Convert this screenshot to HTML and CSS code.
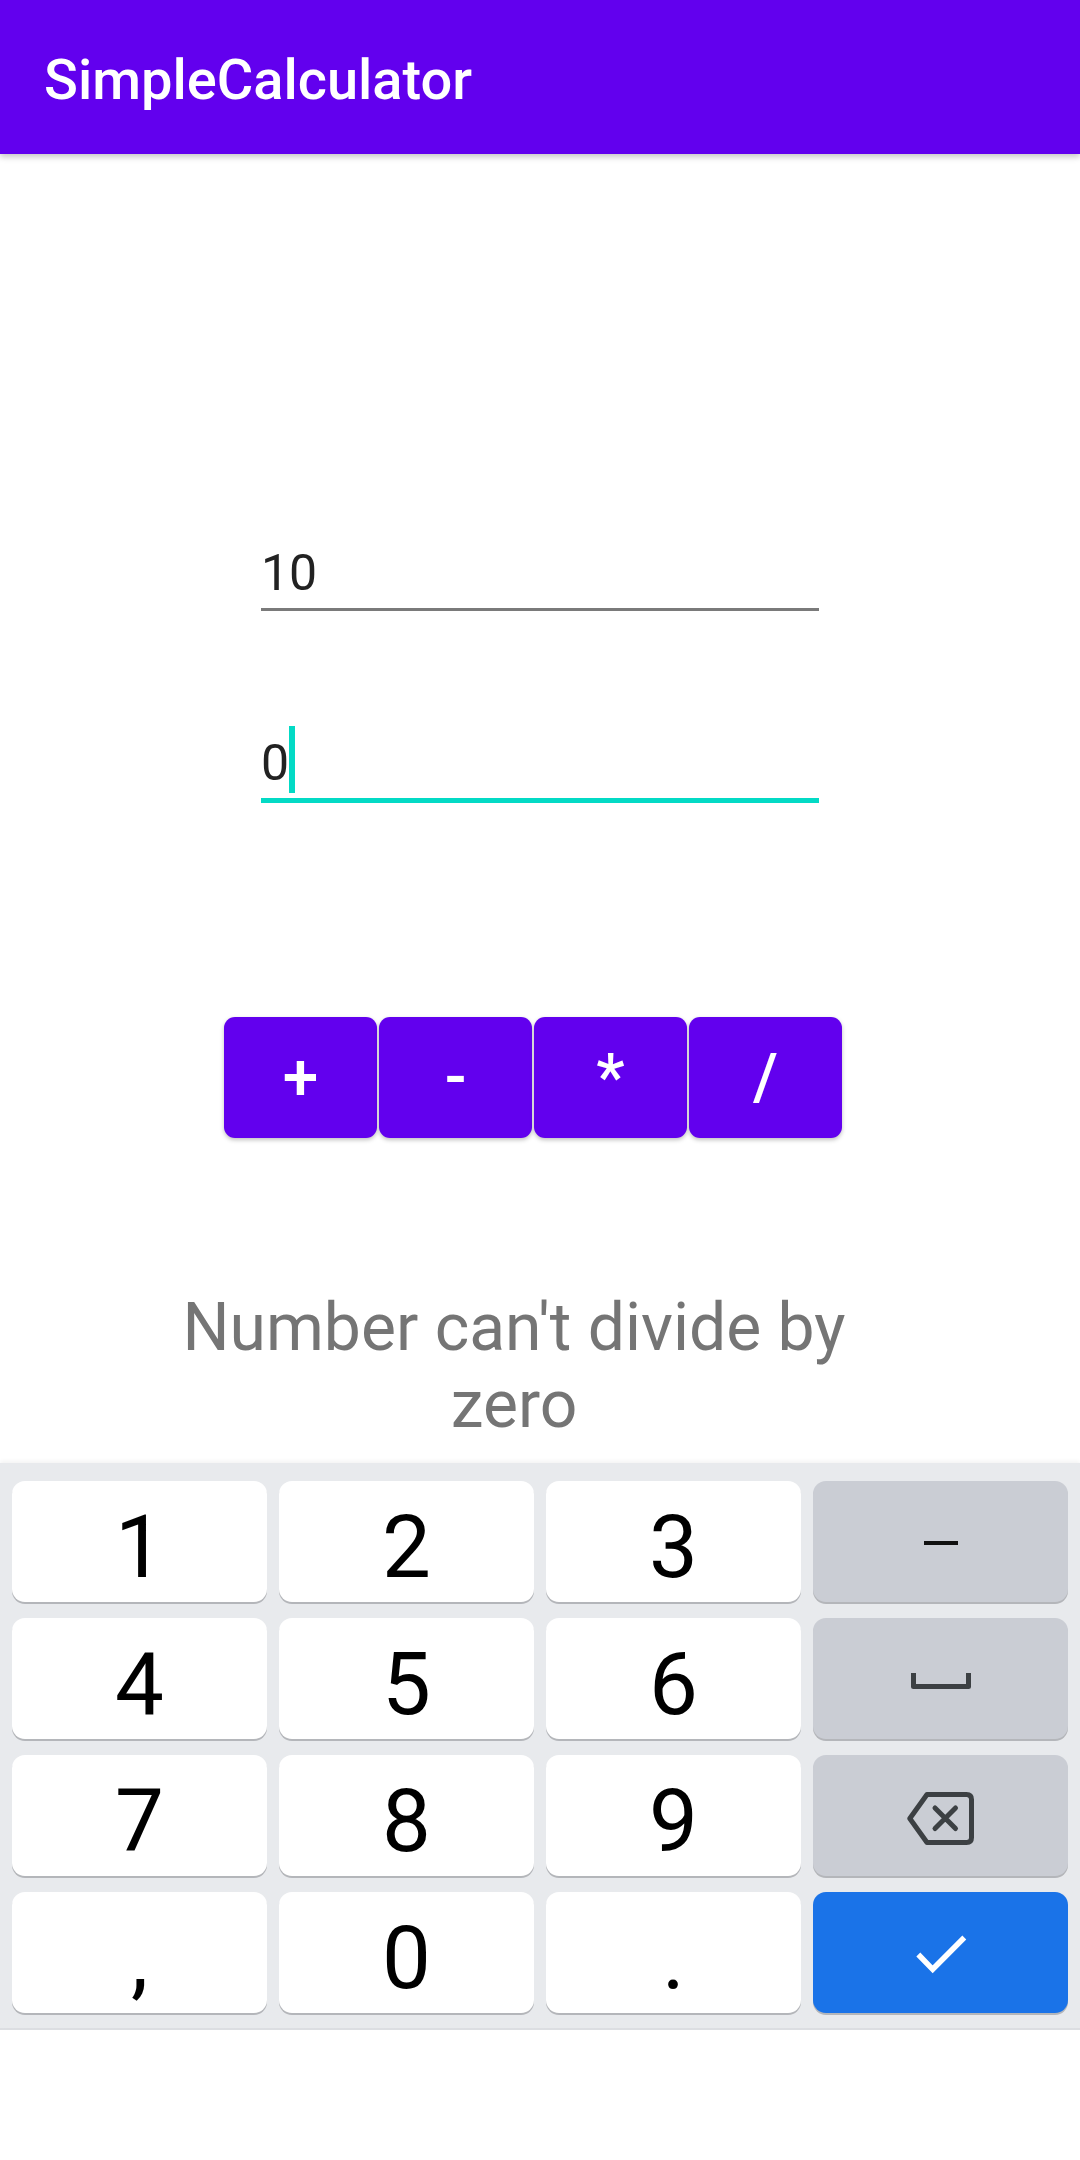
FILE: index.html
```html
<!DOCTYPE html>
<html lang="en">
<head>
<meta charset="utf-8">
<title>SimpleCalculator</title>
<link rel="stylesheet" href="styles.css">
</head>
<body>
<div class="screen">
  <header class="appbar">SimpleCalculator</header>

  <main class="content">
    <div class="field field-first">
      <span class="field-text">10</span>
    </div>
    <div class="field field-focused">
      <span class="field-text">0</span>
      <span class="cursor"></span>
    </div>

    <div class="ops">
      <button class="op">+</button>
      <button class="op">-</button>
      <button class="op">*</button>
      <button class="op">/</button>
    </div>

    <p class="message">Number can't divide by zero</p>
  </main>

  <div class="keyboard">
    <div class="key">1</div>
    <div class="key">2</div>
    <div class="key">3</div>
    <div class="key key-fn"><span class="minus-icon"></span></div>
    <div class="key">4</div>
    <div class="key">5</div>
    <div class="key">6</div>
    <div class="key key-fn">
      <svg class="space-icon" width="60" height="16" viewBox="0 0 60 16">
        <path d="M2.5 0 V13.5 H57.5 V0" fill="none" stroke="#3c4043" stroke-width="5" stroke-linejoin="round"/>
      </svg>
    </div>
    <div class="key">7</div>
    <div class="key">8</div>
    <div class="key">9</div>
    <div class="key key-fn">
      <svg class="back-icon" width="67" height="53" viewBox="0 0 67 53">
        <path d="M20 2.5 H59.5 Q64.5 2.5 64.5 7.5 V45.5 Q64.5 50.5 59.5 50.5 H20 L2.8 26.5 Z" fill="none" stroke="#3c4043" stroke-width="5" stroke-linejoin="round"/>
        <path d="M28 16 L48.5 36.5 M48.5 16 L28 36.5" fill="none" stroke="#3c4043" stroke-width="5" stroke-linecap="round"/>
      </svg>
    </div>
    <div class="key">,</div>
    <div class="key">0</div>
    <div class="key">.</div>
    <div class="key key-enter">
      <svg class="check-icon" width="52" height="42" viewBox="0 0 52 42">
        <path d="M3.3 21.5 L17.7 36.3 L49.3 4.5" fill="none" stroke="#ffffff" stroke-width="5.5"/>
      </svg>
    </div>
  </div>
  <div class="keyboard-edge"></div>
</div>
</body>
</html>
```
FILE: styles.css
```css
html, body {
  margin: 0;
  padding: 0;
  background: #ffffff;
}

.screen {
  width: 1080px;
  height: 2160px;
  overflow: hidden;
  font-family: Roboto, "Noto Sans", "Liberation Sans", sans-serif;
  background: #ffffff;
}

.appbar {
  height: 154px;
  box-sizing: border-box;
  padding-left: 44px;
  padding-top: 6px;
  display: flex;
  align-items: center;
  background: #6200ee;
  color: #ffffff;
  font-size: 56px;
  font-weight: 500;
  box-shadow: 0 3px 6px rgba(0, 0, 0, 0.22);
  position: relative;
  z-index: 1;
}

.content {
  height: 1309px;
  display: flex;
  flex-direction: column;
}

.field {
  width: 558px;
  margin: 0 auto;
  display: flex;
  align-items: flex-end;
  box-sizing: content-box;
}

.field-first {
  margin-top: 389px;
  height: 60px;
  padding-bottom: 5px;
  border-bottom: 3px solid #7a7a7a;
}

.field-focused {
  margin-top: 115px;
  height: 67px;
  padding-bottom: 5px;
  border-bottom: 5px solid #03dac5;
}

.field-text {
  font-size: 50px;
  line-height: 60px;
  color: #222222;
}

.cursor {
  width: 6px;
  height: 67px;
  background: #03dac5;
  margin-left: 0;
}

.ops {
  margin-top: 214px;
  margin-left: 224px;
  display: grid;
  grid-template-columns: repeat(4, 153px);
  column-gap: 2px;
  height: 121px;
}

.op {
  border: none;
  margin: 0;
  padding: 0;
  border-radius: 11px;
  background: #6200ee;
  color: #ffffff;
  font-family: Roboto, "Liberation Sans", sans-serif;
  font-size: 64px;
  font-weight: 500;
  box-shadow: 0 2px 4px rgba(0, 0, 0, 0.25);
  display: flex;
  align-items: center;
  justify-content: center;
}

.message {
  margin: 151px 0 0 154px;
  width: 720px;
  text-align: center;
  font-size: 66px;
  line-height: 77px;
  color: #757575;
}

.keyboard {
  height: 565px;
  box-sizing: border-box;
  padding: 18px 12px 15px;
  background: #e8eaed;
  display: grid;
  grid-template-columns: repeat(4, 255px);
  grid-auto-rows: 121px;
  column-gap: 12px;
  row-gap: 16px;
  box-shadow: 0 -2px 4px rgba(0, 0, 0, 0.05);
}

.keyboard-edge {
  height: 2px;
  background: #dcdee2;
}

.key {
  background: #ffffff;
  border-radius: 13px;
  box-shadow: 0 2px 0 #b4b6ba;
  display: flex;
  align-items: center;
  justify-content: center;
  box-sizing: border-box;
  padding-top: 10px;
  font-size: 87px;
  color: #000000;
}

.key-fn {
  background: #cacdd4;
  padding-top: 0;
}

.key-enter {
  background: #1a73e8;
  padding-top: 3px;
}

.minus-icon {
  display: block;
  width: 34px;
  height: 4px;
  background: #111111;
  margin-top: 3px;
}

.space-icon {
  display: block;
  margin-top: 4px;
}

.back-icon {
  display: block;
  margin-top: 5px;
}

.check-icon {
  display: block;
}
```
